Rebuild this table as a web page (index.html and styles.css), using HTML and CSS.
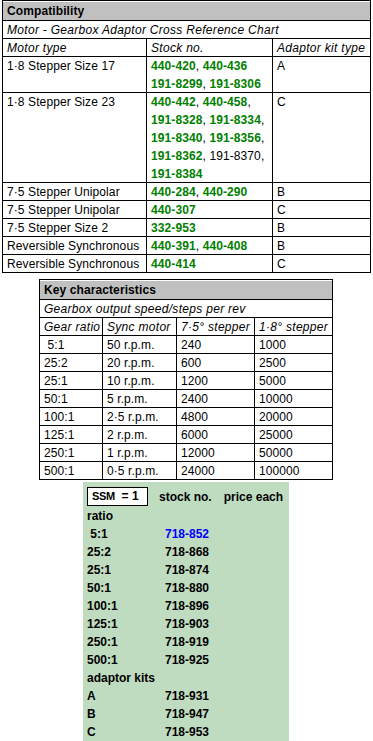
FILE: index.html
```html
<!DOCTYPE html>
<html>
<head>
<meta charset="utf-8">
<link rel="stylesheet" href="styles.css">
</head>
<body>
<div class="page">
<table class="compat">
  <colgroup><col class="c1"><col class="c2"><col class="c3"></colgroup>
  <tr><th colspan="3" class="title">Compatibility</th></tr>
  <tr><td colspan="3" class="it">Motor - Gearbox Adaptor Cross Reference Chart</td></tr>
  <tr class="it"><td>Motor type</td><td>Stock no.</td><td>Adaptor kit type</td></tr>
  <tr><td>1·8 Stepper Size 17</td><td><b>440-420</b>, <b>440-436</b><br><b>191-8299</b>, <b>191-8306</b></td><td>A</td></tr>
  <tr><td>1·8 Stepper Size 23</td><td><b>440-442</b>, <b>440-458</b>,<br><b>191-8328</b>, <b>191-8334</b>,<br><b>191-8340</b>, <b>191-8356</b>,<br><b>191-8362</b>, 191-8370,<br><b>191-8384</b></td><td>C</td></tr>
  <tr><td>7·5 Stepper Unipolar</td><td><b>440-284</b>, <b>440-290</b></td><td>B</td></tr>
  <tr><td>7·5 Stepper Unipolar</td><td><b>440-307</b></td><td>C</td></tr>
  <tr><td>7·5 Stepper Size 2</td><td><b>332-953</b></td><td>B</td></tr>
  <tr><td>Reversible Synchronous</td><td><b>440-391</b>, <b>440-408</b></td><td>B</td></tr>
  <tr><td>Reversible Synchronous</td><td><b>440-414</b></td><td>C</td></tr>
</table>

<table class="keys">
  <colgroup><col class="k1"><col class="k2"><col class="k3"><col class="k4"></colgroup>
  <tr><th colspan="4" class="title">Key characteristics</th></tr>
  <tr><td colspan="4" class="it">Gearbox output speed/steps per rev</td></tr>
  <tr class="it"><td>Gear ratio</td><td>Sync motor</td><td>7·5° stepper</td><td>1·8° stepper</td></tr>
  <tr><td>&nbsp;5:1</td><td>50 r.p.m.</td><td>240</td><td>1000</td></tr>
  <tr><td>25:2</td><td>20 r.p.m.</td><td>600</td><td>2500</td></tr>
  <tr><td>25:1</td><td>10 r.p.m.</td><td>1200</td><td>5000</td></tr>
  <tr><td>50:1</td><td>5 r.p.m.</td><td>2400</td><td>10000</td></tr>
  <tr><td>100:1</td><td>2·5 r.p.m.</td><td>4800</td><td>20000</td></tr>
  <tr><td>125:1</td><td>2 r.p.m.</td><td>6000</td><td>25000</td></tr>
  <tr><td>250:1</td><td>1 r.p.m.</td><td>12000</td><td>50000</td></tr>
  <tr><td>500:1</td><td>0·5 r.p.m.</td><td>24000</td><td>100000</td></tr>
</table>

<div class="kit">
  <div class="khead">
    <span class="ssm"><span class="ssm-s">SSM</span>&nbsp; = 1</span>
    <span class="h-stock">stock no.</span>
    <span class="h-price">price each</span>
  </div>
  <div class="krow"><span>ratio</span></div>
  <div class="krow"><span>&nbsp;5:1</span><span class="link">718-852</span></div>
  <div class="krow"><span>25:2</span><span>718-868</span></div>
  <div class="krow"><span>25:1</span><span>718-874</span></div>
  <div class="krow"><span>50:1</span><span>718-880</span></div>
  <div class="krow"><span>100:1</span><span>718-896</span></div>
  <div class="krow"><span>125:1</span><span>718-903</span></div>
  <div class="krow"><span>250:1</span><span>718-919</span></div>
  <div class="krow"><span>500:1</span><span>718-925</span></div>
  <div class="krow"><span>adaptor kits</span></div>
  <div class="krow"><span>A</span><span>718-931</span></div>
  <div class="krow"><span>B</span><span>718-947</span></div>
  <div class="krow"><span>C</span><span>718-953</span></div>
</div>
</div>
</body>
</html>
```

FILE: styles.css
```css
html, body {
  margin: 0;
  padding: 0;
  background: #fff;
}
body {
  font-family: "Liberation Sans", Arial, sans-serif;
  font-size: 12px;
  color: #000;
}
.page {
  width: 368px;
  margin-left: 2px;
  display: flex;
  flex-direction: column;
  align-items: center;
}
table {
  border-collapse: collapse;
  table-layout: fixed;
  border: 1px solid #000;
}
td, th {
  border: 1px solid #000;
  padding: 0 2px 0 4px;
  line-height: 18px;
  vertical-align: top;
  text-align: left;
  white-space: nowrap;
  overflow: hidden;
  font-weight: normal;
  letter-spacing: 0.1px;
}
td::after {
  content: "";
  display: block;
  height: 0;
  margin-top: -1px;
}
th.title {
  background: #c0c0c0;
  font-weight: bold;
  padding-top: 1px;
  line-height: 18px;
  box-shadow: inset 0 1px 0 #fff;
}
.it, .it td {
  font-style: italic;
  letter-spacing: 0.3px;
}
b {
  color: #008000;
  font-weight: bold;
}
.compat {
  width: 368px;
  align-self: flex-start;
}
.compat .c1 { width: 144px; }
.compat .c2 { width: 126px; }
.compat .c3 { width: 98px; }

.keys {
  width: 293px;
  margin-top: 6px;
}
.keys .k1 { width: 63px; }
.keys .k2 { width: 74px; }
.keys .k3 { width: 78px; }
.keys .k4 { width: 78px; }

.kit {
  width: 206px;
  margin-top: 2px;
  background: #c0dcc0;
  padding: 5px 0 12px 4px;
  box-sizing: border-box;
  font-weight: bold;
  font-size: 12px;
  line-height: 18px;
}
.khead {
  display: flex;
  align-items: center;
  height: 19px;
  margin-bottom: 1px;
}
.ssm {
  box-sizing: border-box;
  width: 61px;
  height: 19px;
  border: 1px solid #000;
  background: #fff;
  line-height: 17px;
  padding-left: 4px;
  white-space: nowrap;
}
.ssm-s {
  font-size: 11px;
  letter-spacing: -0.3px;
}
.h-stock {
  margin-left: 11px;
}
.h-price {
  margin-left: 12px;
}
.krow {
  display: grid;
  grid-template-columns: 78px auto;
  height: 18px;
  white-space: nowrap;
}
.link {
  color: #0000ff;
}
```
